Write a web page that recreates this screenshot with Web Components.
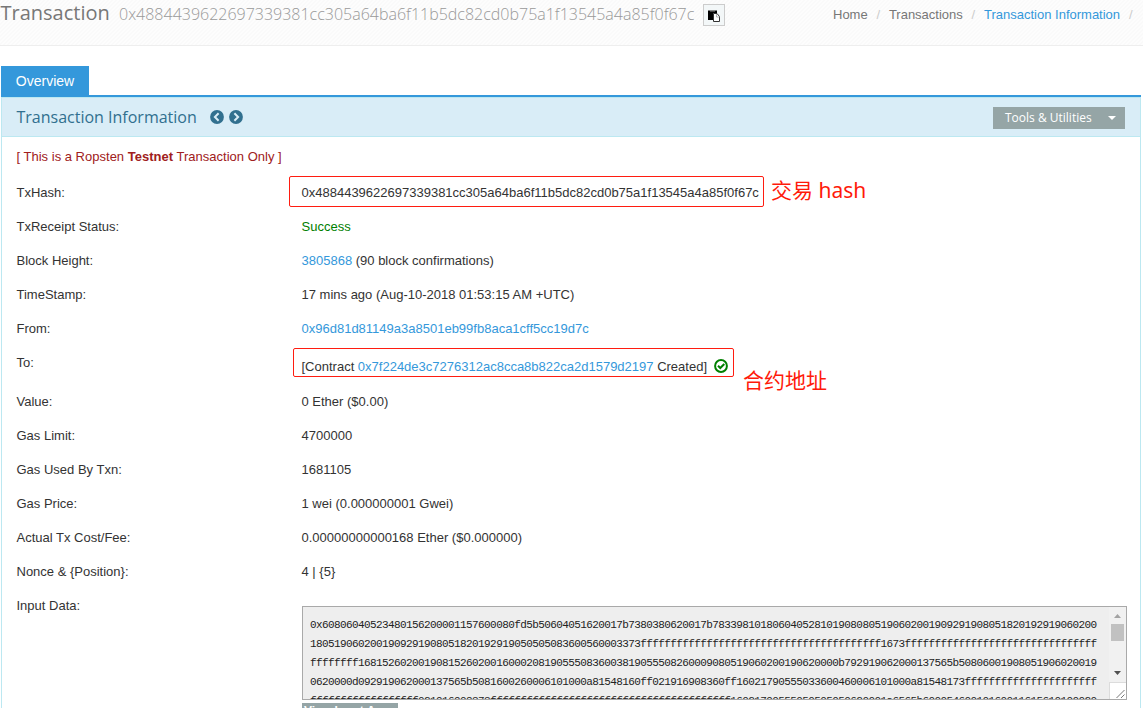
<!DOCTYPE html>
<html lang="en"><head><meta charset="utf-8"><title>Transaction</title>
<style>
html,body{margin:0;height:708px;overflow:hidden;background:#fff}
body{font:13px/18px "Liberation Sans",Arial,sans-serif;color:#333}
</style></head><body>
<tx-page></tx-page>
<script>
const def=(name,html)=>customElements.define(name,class extends HTMLElement{
  constructor(){super();this.attachShadow({mode:'open'}).innerHTML=html;}
});
const F=n=>'f'.repeat(n);

def('tx-breadcrumb',`<style>
:host{display:flex;white-space:pre;color:#777;font-size:13px;line-height:18px}
i{font-style:normal;color:#ccc;width:21.200px;text-align:center}
i:last-child{width:auto;margin-left:9px}
b{font-weight:400;color:#3498db}
</style><span>Home</span><i>/</i><span>Transactions</span><i>/</i><b>Transaction Information</b><i>/</i>`);

def('copy-button',`<style>
:host{display:block;box-sizing:border-box;width:22px;height:22px;border:1px solid #ccc;background:#f3f7f8}
svg{display:block;margin:4px 0 0 3px}
</style><svg width="14" height="14" viewBox="0 0 14 14"><path d="M1 1.500h9v3H6V11H1z" fill="#000"/><path d="M3 1h5v1.500H3z" fill="#888"/><path d="M6.500 4.500h3.500l2.500 3v5h-6z" fill="#fff" stroke="#333"/><path d="M9.500 5v3h3" fill="none" stroke="#999" stroke-width=".7"/></svg>`);

def('tx-header',`<style>
:host{display:flex;box-sizing:border-box;height:46px;border-bottom:1px solid #eee;background:repeating-linear-gradient(135deg,#fafafa 0 1.414px,#fdfdfd 1.414px 2.828px);font-family:"Open Sans",sans-serif;white-space:nowrap}
h1{margin:-2px 0 0 .5px;font-weight:400;font-size:20px;line-height:30px;color:#777;width:118.500px}
.h{font-size:16px;line-height:30px;font-weight:300;color:#999;width:584px;margin-top:-1px}
copy-button{margin-top:4px}
tx-breadcrumb{font-family:"Liberation Sans",Arial,sans-serif;margin:6px 0 0 108px}
</style><h1>Transaction</h1><div class="h">0x4884439622697339381cc305a64ba6f11b5dc82cd0b75a1f13545a4a85f0f67c</div><copy-button></copy-button><tx-breadcrumb></tx-breadcrumb>`);

def('tx-tabs',`<style>
:host{display:block;margin:20px 0 0 1px;width:1140px;height:29px;border-bottom:2px solid #3498db}
div{width:88px;height:29px;background:#3498db;color:#fff;font-size:14px;line-height:30px;text-align:center}
</style><div>Overview</div>`);

def('nav-arrow',`<style>:host{display:block;width:14px;height:14px}:host([next]) svg{transform:scaleX(-1)}svg{display:block}</style>
<svg width="14" height="14" viewBox="0 0 14 14"><circle cx="7" cy="7" r="6.900" fill="#31708f"/><path d="M8.600 3.300L4.900 7l3.700 3.700" fill="none" stroke="#d9edf7" stroke-width="2"/></svg>`);

def('tools-button',`<style>
:host{display:flex;align-items:center;box-sizing:border-box;width:132px;height:22px;background:#95a5a6;color:#fff;padding:0 9px 0 12px;justify-content:space-between;font:12px/22px "Open Sans",sans-serif;white-space:nowrap}
i{border:4px solid transparent;border-top-color:#fff;border-bottom:0}
</style><span>Tools &amp; Utilities</span><i></i>`);

def('panel-head',`<style>
:host{display:flex;box-sizing:border-box;height:39px;border-bottom:1px solid #bce8f1;background:#d9edf7;color:#31708f;padding:0 15px 0 14.500px}
span{font:16px/38px "Open Sans",sans-serif;width:193px;white-space:nowrap}
nav-arrow{margin:12px 5px 0 0}
tools-button{margin:9px 0 0 auto}
</style><span>Transaction Information</span><nav-arrow></nav-arrow><nav-arrow next></nav-arrow><tools-button></tools-button>`);

def('tx-row',`<style>
:host{display:grid;grid-template-columns:285px 1fr;height:34px;line-height:18px;white-space:nowrap}
:host([tall]){height:39px}
:host([tall]) .v{margin-top:4px}
</style><div><slot name="label"></slot></div><div class="v"><slot></slot></div>`);

def('mark-box',`<style>
:host{display:inline-block;position:relative}
.b{position:absolute;box-sizing:border-box;border:1px solid #ff1c10;border-radius:2px;left:var(--x);top:var(--y);width:var(--w);height:var(--h)}
.n{position:absolute;color:#ff1a0a;font:21px/28px "Noto Sans","Noto Sans CJK SC",sans-serif;left:var(--nx);top:var(--ny);white-space:nowrap}
</style><slot></slot><div class="b"></div><div class="n"><slot name="note"></slot></div>`);

def('ok-icon',`<style>:host{display:inline-block;vertical-align:-2px;margin-left:7px}svg{display:block}</style>
<svg width="14" height="14" viewBox="0 0 14 14"><circle cx="7" cy="7" r="5.900" fill="none" stroke="#008000" stroke-width="2"/><path d="M4 6.700l2.300 2.300 4-4" fill="none" stroke="#008000" stroke-width="2"/></svg>`);

def('data-scroll',`<style>
:host{display:flex;flex-direction:column;width:17px;background:#f1f1f1}
svg{display:block}
</style><svg width="17" height="92" viewBox="0 0 17 92"><path d="M5 11l3.500-4 3.500 4z" fill="#a3a3a3"/><rect x="2" y="17" width="13" height="17" fill="#c1c1c1"/><path d="M5 64l3.500 4 3.500-4z" fill="#505050"/><path d="M0 75h17v17H0z" fill="#dcdcdc"/><path d="M1 76h16v16H1z" fill="#fff"/><path d="M7.500 91l8-8M12 91l3.500-3.500" stroke="#777"/></svg>`);

def('data-box',`<style>
:host{display:flex;box-sizing:border-box;width:825px;height:94px;border:1px solid #a9a9a9;background:#eee;overflow:hidden}
pre{margin:0;padding:9px 0 0 7px;flex:1;font:11px/19px "Liberation Mono",monospace;letter-spacing:-.597px;color:#222;height:83px;overflow:hidden}
</style><pre>0x60806040523480156200001157600080fd5b50604051620017b7380380620017b7833981018060405281019080805190602001909291908051820192919060200
1805190602001909291908051820192919050505083600560003373${F(40)}1673${F(32)}
${F(8)}16815260200190815260200160002081905550836003819055508260009080519060200190620000b792919062000137565b50806001908051906020019
0620000d092919062000137565b5081600260006101000a81548160ff021916908360ff16021790555033600460006101000a81548173${F(22)}
${F(18)}021916908373${F(40)}16021790555050505050620001a6565b60005460010160011615610100020</pre><data-scroll></data-scroll>`);

def('convert-button',`<style>
:host{display:block;width:96px;height:22px;margin-top:3px;background:#95a5a6;color:#fff;font:bold 12px/16px "Liberation Sans",Arial,sans-serif;text-indent:2px;white-space:nowrap}
</style><slot></slot>`);

def('tx-page',`<style>
:host{display:block;width:1143px;height:708px;overflow:hidden}
section{width:1140px;margin-left:1px;height:640px;box-sizing:border-box;border:1px solid #bce8f1}
.body{padding:11px 14px 10px 14.500px}
.test{color:#a02020;height:36px;line-height:18px;letter-spacing:.01px}
a{color:#3498db}
.ok{color:green}
.input{height:150px}
data-box{margin-top:9px;margin-left:.5px}
convert-button{margin-left:.5px}
.m1{--x:-12.500px;--y:-8px;--w:475px;--h:31px;--nx:469.500px;--ny:-8px}
.m2{--x:-8.500px;--y:-10px;--w:441px;--h:29px;--nx:441.400px;--ny:8px}
</style>
<tx-header></tx-header><tx-tabs></tx-tabs>
<section><panel-head></panel-head><div class="body">
<div class="test">[ This is a Ropsten <b>Testnet</b> Transaction Only ]</div>
<tx-row><span slot="label">TxHash:</span><mark-box class="m1">0x4884439622697339381cc305a64ba6f11b5dc82cd0b75a1f13545a4a85f0f67c<span slot="note">交易 hash</span></mark-box></tx-row>
<tx-row><span slot="label">TxReceipt Status:</span><span class="ok">Success</span></tx-row>
<tx-row><span slot="label">Block Height:</span><a>3805868</a> (90 block confirmations)</tx-row>
<tx-row><span slot="label">TimeStamp:</span>17 mins ago (Aug-10-2018 01:53:15 AM +UTC)</tx-row>
<tx-row><span slot="label">From:</span><a>0x96d81d81149a3a8501eb99fb8aca1cff5cc19d7c</a></tx-row>
<tx-row tall><span slot="label">To:</span><mark-box class="m2">[Contract <a>0x7f224de3c7276312ac8cca8b822ca2d1579d2197</a> Created]<ok-icon></ok-icon><span slot="note">合约地址</span></mark-box></tx-row>
<tx-row><span slot="label">Value:</span>0 Ether ($0.00)</tx-row>
<tx-row><span slot="label">Gas Limit:</span>4700000</tx-row>
<tx-row><span slot="label">Gas Used By Txn:</span>1681105</tx-row>
<tx-row><span slot="label">Gas Price:</span>1 wei (0.000000001 Gwei)</tx-row>
<tx-row><span slot="label">Actual Tx Cost/Fee:</span>0.00000000000168 Ether ($0.000000)</tx-row>
<tx-row><span slot="label">Nonce &amp; {Position}:</span>4 | {5}</tx-row>
<tx-row class="input"><span slot="label">Input Data:</span><data-box></data-box><convert-button>View Input As</convert-button></tx-row>
</div></section>`);
</script></body></html>
